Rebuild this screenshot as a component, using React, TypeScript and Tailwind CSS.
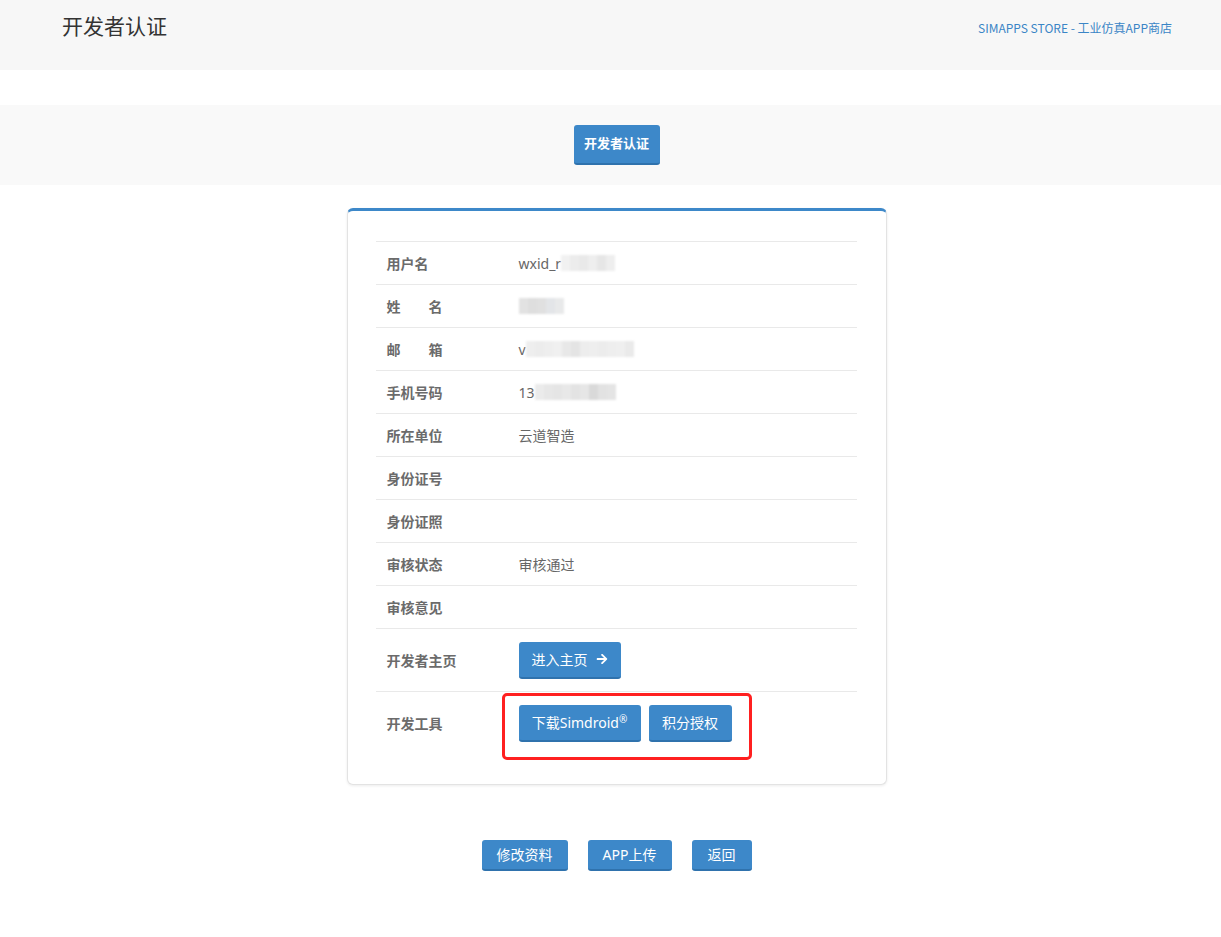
import { FaArrowRight } from "react-icons/fa";

type Row = {
  label: string;
  value?: React.ReactNode;
};

function Blur({ cells, prefix }: { cells: string[]; prefix?: string }) {
  return (
    <span className="flex items-center">
      {prefix && <span>{prefix}</span>}
      <span className="flex h-[16px] blur-[1px]">
        {cells.map((c, i) => (
          <span key={i} className="h-full w-[9px]" style={{ backgroundColor: c }} />
        ))}
      </span>
    </span>
  );
}

const rows: Row[] = [
  {
    label: "用户名",
    value: (
      <Blur
        prefix="wxid_r"
        cells={["#f1f1f1", "#ececec", "#e9e9e9", "#eeeeee", "#e6e6e6", "#eeeeee"]}
      />
    ),
  },
  {
    label: "姓\u3000\u3000名",
    value: <Blur cells={["#e2e2e2", "#dedede", "#e0e0e0", "#e3e5e8", "#e8e9ea"]} />,
  },
  {
    label: "邮\u3000\u3000箱",
    value: (
      <Blur
        prefix="v"
        cells={["#eeeeee", "#ececec", "#eeeeee", "#f0f0f0", "#e8e8e8", "#e4e4e4", "#ededed", "#eeeeee", "#ececec", "#eeeeee", "#efefef", "#eaeaea"]}
      />
    ),
  },
  {
    label: "手机号码",
    value: (
      <Blur
        prefix="13"
        cells={["#ebebeb", "#e7e7e7", "#e5e5e5", "#e8e8e8", "#e3e3e3", "#e6e6e6", "#d9d9d9", "#e2e2e2", "#e4e4e4"]}
      />
    ),
  },
  { label: "所在单位", value: "云道智造" },
  { label: "身份证号" },
  { label: "身份证照" },
  { label: "审核状态", value: "审核通过" },
  { label: "审核意见" },
];

const btn =
  "rounded-[3px] border-b-2 border-[#2f72ad] bg-[#3d88c9] text-white";

export default function App() {
  return (
    <div
      className="min-h-screen bg-white text-[14px] text-[#666]"
      style={{ fontFamily: '"Noto Sans", "Noto Sans CJK SC", sans-serif' }}
    >
      <header className="flex h-[70px] items-start justify-between bg-[#f7f7f7] pl-[62px] pr-[49px]">
        <h1 className="pt-[10px] text-[21px] leading-[32px] text-[#333]">开发者认证</h1>
        <a
          className="pt-[19px] text-[12px] leading-[18px] text-[#3a85c6]"
          style={{ fontFamily: '"Noto Sans CJK SC", sans-serif' }}
        >
          SIMAPPS STORE - 工业仿真APP商店
        </a>
      </header>

      <div className="mt-[35px] flex h-[80px] items-center justify-center bg-[#f9f9f9] pl-3">
        <button className="h-[40px] w-[86px] rounded-[3px] border-b-2 border-[#2f72ad] bg-[#3d88c9] text-[13px] font-bold text-white">
          开发者认证
        </button>
      </div>

      <div className="flex flex-col items-center pl-3">
        <div className="mt-[23px] w-[540px] rounded-[6px] border border-t-[3px] border-[#e3e3e3] border-t-[#3d88c9] bg-white pb-[30px] pl-[28px] pr-[29px] pt-[30px] shadow-[0_1px_3px_rgba(0,0,0,0.08)]">
          <div className="flex flex-col">
            {rows.map((r) => (
              <div
                key={r.label}
                className="flex h-[43px] items-center border-t border-[#e9e9e9]"
              >
                <div className="w-[143px] pl-[11px] font-bold text-[#6b6b6b]">
                  {r.label}
                </div>
                <div className="flex-1">{r.value}</div>
              </div>
            ))}
            <div className="flex h-[63px] items-center border-t border-[#e9e9e9]">
              <div className="w-[143px] pl-[11px] font-bold text-[#6b6b6b]">开发者主页</div>
              <button className={`${btn} flex h-[37px] w-[102px] items-center justify-center gap-[8px]`}>
                进入主页
                <FaArrowRight className="h-[12px] w-[12px]" />
              </button>
            </div>
            <div className="flex h-[63px] items-center border-t border-[#e9e9e9]">
              <div className="w-[143px] pl-[11px] font-bold text-[#6b6b6b]">开发工具</div>
              <div className="relative flex gap-[8px]">
                <button className={`${btn} h-[37px] w-[122px]`}>
                  下载Simdroid<sup className="text-[10px]">®</sup>
                </button>
                <button className={`${btn} h-[37px] w-[83px]`}>积分授权</button>
                <div className="pointer-events-none absolute bottom-[-18px] left-[-17px] right-[-20px] top-[-12px] rounded-[5px] border-[3px] border-[#ff2020]" />
              </div>
            </div>
          </div>
        </div>

        <div className="mt-[55px] flex gap-[20px]">
          <button className={`${btn} h-[31px] w-[86px]`}>修改资料</button>
          <button className={`${btn} h-[31px] w-[84px]`}>APP上传</button>
          <button className={`${btn} h-[31px] w-[60px]`}>返回</button>
        </div>
      </div>
    </div>
  );
}
